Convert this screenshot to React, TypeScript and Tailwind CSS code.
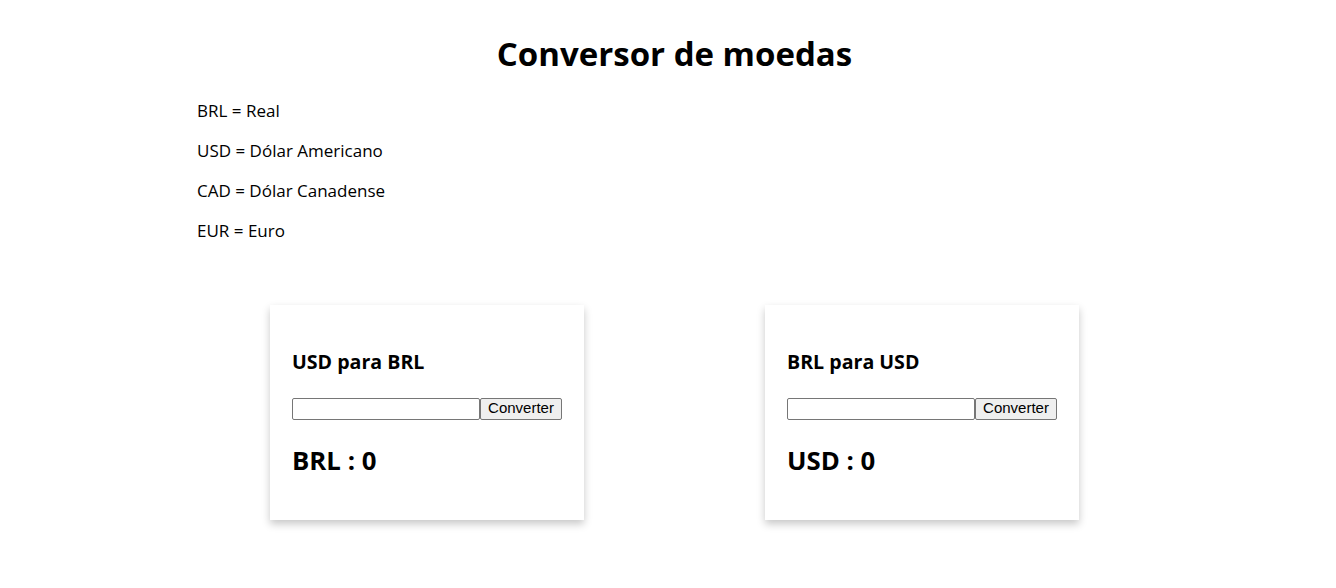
const moedas = [
  'BRL = Real',
  'USD = Dólar Americano',
  'CAD = Dólar Canadense',
  'EUR = Euro',
]

const cards = [
  { title: 'USD para BRL', result: 'BRL : 0' },
  { title: 'BRL para USD', result: 'USD : 0' },
]

export default function App() {
  return (
    <div className="min-h-screen bg-white text-black font-['Open_Sans','Noto_Sans',sans-serif]">
      <div className="w-[1349px] pt-[32px]">
        <h1 className="text-center text-[33px] font-bold leading-[44px]">Conversor de moedas</h1>

        {/* legenda */}
        <div className="ml-[197px] mt-[23px] flex flex-col gap-[16px]">
          {moedas.map((m) => (
            <p key={m} className="text-[17px] leading-[24px]">{m}</p>
          ))}
        </div>

        {/* cards */}
        <div className="mt-[62px] flex justify-center gap-[181px]">
          {cards.map((c) => (
            <div
              key={c.title}
              className="w-[314px] h-[215px] bg-white px-[22px] pt-[44px] shadow-[0_4px_8px_rgba(0,0,0,0.22)]"
            >
              <h3 className="text-[19.6px] font-bold leading-[26px]">{c.title}</h3>
              <div className="mt-[23px] flex">
                <input
                  type="text"
                  className="w-[188px] h-[22px] border border-[#767676] rounded-[2px] px-[2px] text-[13.33px] font-['Liberation_Sans',Arial,sans-serif]"
                />
                <button className="w-[82px] h-[22px] pb-[3px] border border-[#767676] rounded-[2px] bg-[#efefef] text-[15px] leading-none font-['Liberation_Sans',Arial,sans-serif]">
                  Converter
                </button>
              </div>
              <h2 className="mt-[24px] text-[25.8px] font-bold leading-[32px]">{c.result}</h2>
            </div>
          ))}
        </div>
      </div>
    </div>
  )
}
